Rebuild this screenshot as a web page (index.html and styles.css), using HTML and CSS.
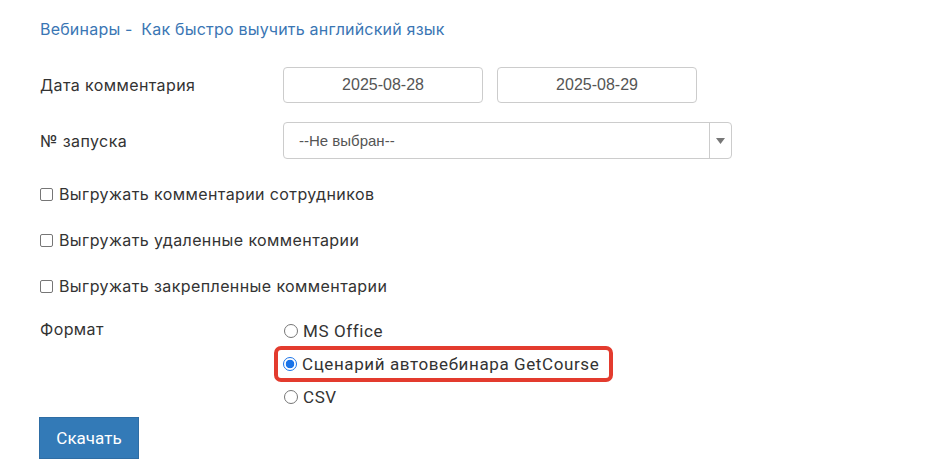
FILE: index.html
```html
<!DOCTYPE html>
<html lang="ru">
<head>
<meta charset="utf-8">
<link rel="stylesheet" href="styles.css">
</head>
<body>
<div class="page">
  <div class="crumbs"><span class="crumb">Вебинары</span> - <span class="crumb crumb-last">Как быстро выучить английский язык</span></div>

  <div class="row row-date">
    <div class="label">Дата комментария</div>
    <div class="field dates">
      <div class="input date">2025-08-28</div>
      <div class="input date">2025-08-29</div>
    </div>
  </div>

  <div class="row row-select">
    <div class="label">№ запуска</div>
    <div class="field">
      <div class="select">
        <span class="select-text">--Не выбран--</span>
        <span class="select-arrow"><svg width="9" height="6" viewBox="0 0 9 6"><path d="M0 0H9L4.5 6Z" fill="#777"/></svg></span>
      </div>
    </div>
  </div>

  <label class="check"><span class="box"></span>Выгружать комментарии сотрудников</label>
  <label class="check"><span class="box"></span>Выгружать удаленные комментарии</label>
  <label class="check"><span class="box"></span>Выгружать закрепленные комментарии</label>

  <div class="row row-format">
    <div class="label">Формат</div>
    <div class="field radios">
      <label class="radio"><span class="circle"></span>MS Office</label>
      <div class="highlight"><label class="radio"><span class="circle on"></span>Сценарий автовебинара GetCourse</label></div>
      <label class="radio"><span class="circle"></span>CSV</label>
    </div>
  </div>

  <button class="btn">Скачать</button>
</div>
</body>
</html>
```
FILE: styles.css
```css
html, body {
  margin: 0;
  padding: 0;
  background: #fff;
}
body {
  font-family: Inter, "Noto Sans", sans-serif;
  font-size: 16px;
  color: #333;
}
.page {
  padding: 19px 0 0 40px;
}
.crumbs {
  color: #3a76b4;
  font-size: 16px;
  line-height: 20px;
  letter-spacing: 0.2px;
}
.crumb-last {
  margin-left: 4px;
}
.row {
  display: grid;
  grid-template-columns: 243px auto;
  align-items: center;
}
.label {
  letter-spacing: 0.4px;
}
.row-date {
  margin-top: 28px;
}
.dates {
  display: flex;
  gap: 14px;
}
.input {
  box-sizing: border-box;
  width: 200px;
  height: 36px;
  border: 1px solid #ccc;
  border-radius: 4px;
  font-family: "Liberation Sans", Arial, sans-serif;
  font-size: 16px;
  color: #555;
  display: flex;
  align-items: center;
}
.date {
  justify-content: center;
}
.row-select {
  margin-top: 19px;
}
.select {
  box-sizing: border-box;
  width: 449px;
  height: 37px;
  border: 1px solid #ccc;
  border-radius: 4px;
  display: flex;
  align-items: stretch;
  font-family: "Liberation Sans", Arial, sans-serif;
  font-size: 15px;
  color: #555;
}
.select-text {
  flex: 1;
  display: flex;
  align-items: center;
  padding-left: 15px;
}
.select-arrow {
  width: 21px;
  border-left: 1px solid #ccc;
  display: flex;
  align-items: center;
  justify-content: center;
}
.check {
  display: flex;
  align-items: center;
  height: 20px;
  margin-top: 26px;
  letter-spacing: 0.4px;
}
.check:first-of-type {
  margin-top: 25px;
}
.box {
  box-sizing: border-box;
  width: 13px;
  height: 13px;
  border: 1px solid #767676;
  border-radius: 2px;
  margin-right: 6px;
  flex: none;
}
.row-format {
  margin-top: 23px;
  align-items: start;
}
.row-format .label {
  line-height: 20px;
}
.radios {
  display: flex;
  flex-direction: column;
  align-items: flex-start;
  margin-top: 2px;
}
.radio {
  display: flex;
  align-items: center;
  height: 20px;
  font-family: Roboto, "Liberation Sans", sans-serif;
  font-size: 17px;
  letter-spacing: 0.6px;
  color: #333;
}
.circle {
  box-sizing: border-box;
  width: 14px;
  height: 14px;
  border: 1px solid #767676;
  border-radius: 50%;
  margin: 0 5px 0 1px;
  flex: none;
}
.circle.on {
  border: 1px solid #1a73e8;
  background: radial-gradient(circle, #1a73e8 0 4px, #fff 4.6px);
}
.highlight {
  margin: 5px 0 5px -9px;
  border: 4px solid #e33b2e;
  border-radius: 7px;
  padding: 4px 10px 4px 4px;
}
.btn {
  display: block;
  margin: 10px 0 0 -1px;
  width: 100px;
  height: 42px;
  background: #337ab7;
  border: 1px solid #2e6da4;
  border-radius: 0;
  color: #fff;
  font-family: Roboto, "Liberation Sans", sans-serif;
  font-size: 17px;
  padding: 0;
}
```
